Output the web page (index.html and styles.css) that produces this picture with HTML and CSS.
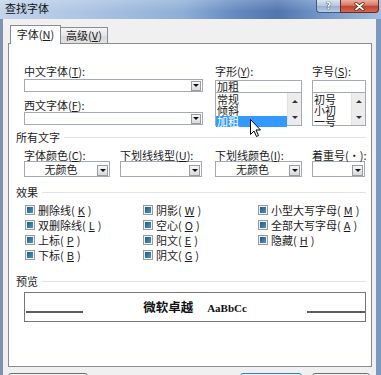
FILE: index.html
```html
<!DOCTYPE html>
<html lang="zh-CN">
<head>
    <meta charset="UTF-8">
    <meta name="viewport" content="width=device-width, initial-scale=1.0">
    <title>查找字体</title>
    <link rel="stylesheet" href="styles.css">
</head>
<body>
    <div class="titlebar">
        <span class="title">查找字体</span>
        <div class="caption">
            <span class="cap-btn help">?</span>
            <span class="cap-btn close">
                <svg width="11" height="9" viewBox="0 0 11 9">
                    <path d="M2 1.5 L9 7.5 M9 1.5 L2 7.5" stroke="#5a1a10" stroke-width="3.2" stroke-linecap="round"/>
                    <path d="M2 1.5 L9 7.5 M9 1.5 L2 7.5" stroke="#fff" stroke-width="1.8" stroke-linecap="round"/>
                </svg>
            </span>
        </div>
    </div>

    <div class="client">
        <div class="tabs">
            <span class="tab active">字体(<u>N</u>)</span>
            <span class="tab">高级(<u>V</u>)</span>
        </div>

        <div class="panel">
            <div class="font-row">
                <div class="col-a">
                    <div class="lbl">中文字体(<u>T</u>):</div>
                    <div class="combo gap-2"><span class="combo-text"></span><span class="drop"></span></div>
                    <div class="lbl lbl-2">西文字体(<u>F</u>):</div>
                    <div class="combo gap-1"><span class="combo-text"></span><span class="drop"></span></div>
                </div>
                <div class="col-b">
                    <div class="lbl">字形(<u>Y</u>):</div>
                    <div class="edit">加粗</div>
                    <div class="listbox">
                        <div class="items">
                            <div class="item">常规</div>
                            <div class="item">倾斜</div>
                            <div class="item sel">加粗</div>
                        </div>
                        <div class="scroll">
                            <span class="sb"><i class="arrow-up"></i></span>
                            <span class="sb"><i class="arrow-down"></i></span>
                        </div>
                    </div>
                </div>
                <div class="col-c">
                    <div class="lbl">字号(<u>S</u>):</div>
                    <div class="edit"></div>
                    <div class="listbox">
                        <div class="items">
                            <div class="item">初号</div>
                            <div class="item">小初</div>
                            <div class="item">一号</div>
                        </div>
                        <div class="scroll">
                            <span class="sb"><i class="arrow-up"></i></span>
                            <span class="sb"><i class="arrow-down"></i></span>
                        </div>
                    </div>
                </div>
            </div>

            <div class="group group-all">所有文字</div>
            <div class="attr-row">
                <div class="attr w-color">
                    <div class="lbl">字体颜色(<u>C</u>):</div>
                    <div class="combo tall"><span class="combo-text">无颜色</span><span class="drop"></span></div>
                </div>
                <div class="attr w-uline">
                    <div class="lbl">下划线线型(<u>U</u>):</div>
                    <div class="combo tall"><span class="combo-text"></span><span class="drop"></span></div>
                </div>
                <div class="attr w-ucolor">
                    <div class="lbl">下划线颜色(<u>I</u>):</div>
                    <div class="combo tall"><span class="combo-text">无颜色</span><span class="drop"></span></div>
                </div>
                <div class="attr w-emph">
                    <div class="lbl">着重号(·):</div>
                    <div class="combo tall"><span class="combo-text"></span><span class="drop"></span></div>
                </div>
            </div>

            <div class="group group-fx">效果</div>
            <div class="effects">
                <div class="chk"><span class="box"></span>删除线(<u>K</u>)</div>
                <div class="chk"><span class="box"></span>双删除线(<u>L</u>)</div>
                <div class="chk"><span class="box"></span>上标(<u>P</u>)</div>
                <div class="chk"><span class="box"></span>下标(<u>B</u>)</div>
                <div class="chk"><span class="box"></span>阴影(<u>W</u>)</div>
                <div class="chk"><span class="box"></span>空心(<u>O</u>)</div>
                <div class="chk"><span class="box"></span>阳文(<u>E</u>)</div>
                <div class="chk"><span class="box"></span>阴文(<u>G</u>)</div>
                <div class="chk"><span class="box"></span>小型大写字母(<u>M</u>)</div>
                <div class="chk"><span class="box"></span>全部大写字母(<u>A</u>)</div>
                <div class="chk"><span class="box"></span>隐藏(<u>H</u>)</div>
            </div>

            <div class="group group-pv">预览</div>
            <div class="preview">
                <span class="pv-line"></span>
                <span class="pv-text"><b class="pv-cn">微软卓越</b><b class="pv-en">AaBbCc</b></span>
                <span class="pv-line pv-line-r"></span>
            </div>

            <!-- mouse pointer over the style list -->
            <svg class="cursor" width="12" height="19" viewBox="0 0 12 19">
                <path d="M0.5 0.5 V15.5 L4 12 L6.5 17.5 L8.5 16.5 L6 11 H10.5 Z" fill="#fff" stroke="#000" stroke-width="1" stroke-linejoin="round"/>
            </svg>
        </div>

        <!-- only the top edge of the dialog buttons is visible -->
        <div class="footer">
            <span class="btn btn-a"></span>
            <span class="btn btn-b"></span>
            <span class="btn btn-c"></span>
        </div>
    </div>
</body>
</html>
```

FILE: styles.css
```css
body {
    margin: 0;
    width: 381px;
    height: 375px;
    overflow: hidden;
    background: linear-gradient(to right, #7f93b1 0, #7f93b1 3px, #6f8bb6 50%, #7d97bf 100%);
    font-family: "Noto Sans CJK SC", "Noto Sans", sans-serif;
    font-size: 11px;
    color: #1b1b1b;
}
u {
    text-decoration: underline;
}

/* title bar */
.titlebar {
    height: 19px;
    display: flex;
    justify-content: space-between;
    align-items: flex-start;
    background:
        linear-gradient(rgba(255,255,255,0.2), rgba(255,255,255,0) 60%),
        linear-gradient(to right, #c2d4eb 0%, #aac2e2 25%, #8eaed7 48%, #6489c0 62%, #4f76b0 73%, #7395c7 84%, #a3bcde 100%);
}
.title {
    margin: 2px 0 0 5px;
    line-height: 12px;
    font-size: 11px;
    color: #111;
}
.caption {
    display: flex;
    margin-right: 2px;
}
.cap-btn {
    height: 13px;
    box-sizing: border-box;
    display: flex;
    align-items: center;
    justify-content: center;
    border: 1px solid #3f5a83;
    border-top: none;
}
.help {
    width: 24px;
    border-right: none;
    border-radius: 0 0 0 4px;
    background: linear-gradient(#dbe5f1, #b4c6de 50%, #97afd0 51%, #b9cbe3);
    color: #fff;
    font-family: "DejaVu Sans", sans-serif;
    font-weight: bold;
    font-size: 9px;
    line-height: 10px;
    text-shadow: 0 0 1px #1d2d48, 0 0 1px #1d2d48;
}
.close {
    width: 39px;
    border-color: #6b2a20;
    border-radius: 0 0 4px 0;
    background: linear-gradient(#eab0a2, #d87762 45%, #c0412b 50%, #d36a50);
}

/* dialog client area */
.client {
    height: 356px;
    overflow: hidden;
    margin: 0 5px 0 3px;
    padding: 6px 4px 0 5px;
    box-sizing: border-box;
    background: #f0f0f0;
}
.tabs {
    display: flex;
    align-items: flex-end;
    height: 18px;
    padding-left: 2px;
}
.tab {
    width: 47px;
    height: 16px;
    box-sizing: border-box;
    border: 1px solid #898c95;
    border-left: none;
    border-bottom: none;
    background: linear-gradient(#f4f4f4, #e6e6e6 50%, #d9d9d9 51%, #e1e1e1);
    text-align: center;
    line-height: 14px;
}
.tab.active {
    width: 51px;
    height: 19px;
    margin-bottom: -1px;
    padding-top: 2px;
    line-height: 12px;
    border-left: 1px solid #898c95;
    background: #fff;
    position: relative;
    z-index: 1;
}
.panel {
    height: 324px;
    box-sizing: border-box;
    border: 1px solid #898c95;
    background: #fff;
    padding: 21px 5px 0 15px;
    position: relative;
}

.lbl {
    line-height: 12px;
    height: 12px;
    white-space: nowrap;
}
.lbl-2 {
    margin-top: 7px;
}

/* font selectors */
.font-row {
    display: flex;
}
.col-a {
    width: 179px;
}
.col-b {
    width: 87px;
    margin-left: 12px;
}
.col-c {
    width: 54px;
    margin-left: 10px;
}
.combo {
    height: 13px;
    box-sizing: border-box;
    border: 1px solid #a3aab3;
    background: #fff;
    display: flex;
    align-items: center;
    padding-right: 1px;
}
.gap-2 {
    margin-top: 2px;
}
.gap-1 {
    margin-top: 1px;
}
.combo-text {
    flex: 1;
    text-align: center;
    line-height: 12px;
}
.drop {
    width: 10px;
    height: 10px;
    box-sizing: border-box;
    border: 1px solid #9c9c9c;
    background: linear-gradient(#f7f7f7, #dadada);
    display: flex;
    align-items: center;
    justify-content: center;
}
.drop::after {
    content: "";
    border-left: 3px solid transparent;
    border-right: 3px solid transparent;
    border-top: 3px solid #111;
}
.combo.tall {
    height: 16px;
    padding-right: 1px;
}
.combo.tall .drop {
    width: 11px;
    height: 11px;
    margin-top: 2px;
}
.edit {
    height: 13px;
    margin-top: 3px;
    box-sizing: border-box;
    border: 1px solid #a3aab3;
    padding-left: 1px;
    line-height: 11px;
}
.listbox {
    height: 34px;
    margin-top: -1px;
    box-sizing: border-box;
    border: 1px solid #a3aab3;
    display: flex;
}
.items {
    flex: 1;
    padding-top: 1px;
}
.item {
    height: 11px;
    line-height: 11px;
    padding-left: 1px;
}
.item.sel {
    background: #3399ff;
    color: #fff;
}
.scroll {
    width: 13px;
    display: flex;
    flex-direction: column;
    background: #ececec;
    border-left: 1px solid #e2e2e2;
}
.sb {
    flex: 1;
    display: flex;
    align-items: center;
    justify-content: center;
}
.arrow-up {
    border-left: 3px solid transparent;
    border-right: 3px solid transparent;
    border-bottom: 3px solid #333;
}
.arrow-down {
    border-left: 3px solid transparent;
    border-right: 3px solid transparent;
    border-top: 3px solid #333;
}

/* group headers */
.group {
    display: flex;
    align-items: center;
    margin-left: -8px;
    line-height: 12px;
    height: 12px;
}
.group::after {
    content: "";
    flex: 1;
    height: 1px;
    background: #dde3e8;
    margin-left: 4px;
}
.group-all {
    margin-top: 5px;
}
.group-fx {
    margin-top: 9px;
}
.group-pv {
    margin-top: 13px;
}

/* all text attributes */
.attr-row {
    display: flex;
    margin-top: 6px;
}
.w-color {
    width: 86px;
}
.w-uline {
    width: 82px;
    margin-left: 10px;
}
.w-ucolor {
    width: 87px;
    margin-left: 13px;
}
.w-emph {
    width: 53px;
    margin-left: 10px;
}

/* effects */
.effects {
    display: grid;
    grid-template-rows: repeat(4, 15px);
    grid-template-columns: 118px 115px 1fr;
    grid-auto-flow: column;
    margin-top: 4px;
    margin-left: 1px;
}
.chk {
    display: flex;
    align-items: center;
    gap: 3px;
    white-space: nowrap;
}
.box {
    width: 10px;
    height: 10px;
    box-sizing: border-box;
    border: 1px solid #9a9a9a;
    background: #eef1f3;
    display: flex;
    align-items: center;
    justify-content: center;
}
.box::after {
    content: "";
    width: 6px;
    height: 6px;
    background: linear-gradient(135deg, #1f5a83, #4f94c2);
}

/* preview */
.preview {
    height: 30px;
    margin-top: 5px;
    box-sizing: border-box;
    border: 1px solid #777;
    display: flex;
    align-items: flex-start;
}
.pv-line {
    width: 57px;
    height: 2px;
    margin: 18px 0 0 1px;
    background: #5c5c5c;
}
.pv-line-r {
    width: 58px;
    margin: 18px 0 0 0;
}
.pv-text {
    flex: 1;
    text-align: center;
    line-height: 28px;
    white-space: nowrap;
}
.pv-cn {
    font-size: 12.5px;
    font-weight: bold;
    color: #111;
}
.pv-en {
    font-family: "Liberation Serif", serif;
    font-size: 11px;
    font-weight: bold;
    margin-left: 14px;
    color: #111;
}

.cursor {
    position: absolute;
    left: 241px;
    top: 75px;
}

/* bottom buttons, mostly below the visible area */
.footer {
    display: flex;
    margin-top: 6px;
}
.btn {
    height: 23px;
    box-sizing: border-box;
    border: 1px solid #707070;
    border-radius: 3px;
    background: linear-gradient(#f2f2f2, #dddddd);
}
.btn-a {
    width: 80px;
}
.btn-b {
    width: 62px;
    margin-left: auto;
    border-color: #3c7fb1;
    background: linear-gradient(#eaf6fd, #bee6fd);
}
.btn-c {
    width: 58px;
    margin-left: 10px;
    margin-right: 2px;
}
```
